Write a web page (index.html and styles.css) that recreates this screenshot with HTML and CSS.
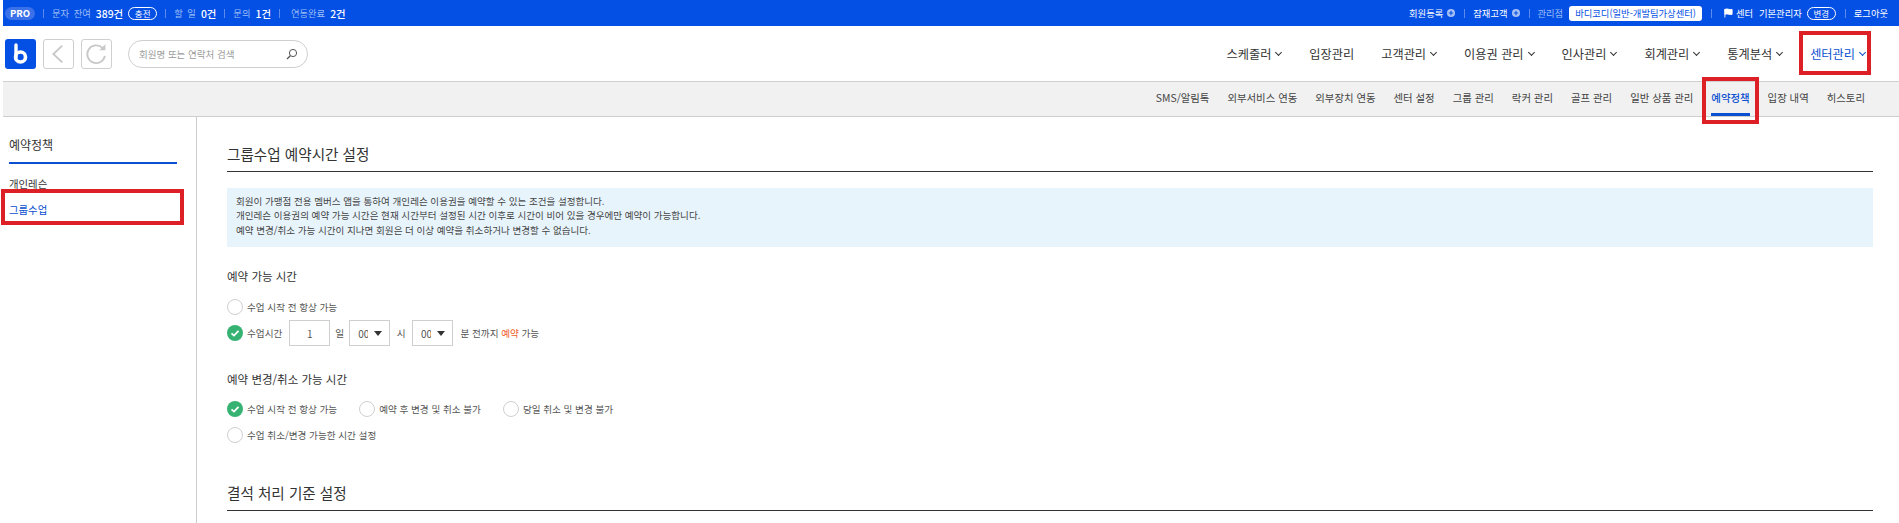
FILE: index.html
```html
<!DOCTYPE html>
<html lang="ko">
<head>
    <meta charset="utf-8">
    <title>예약정책</title>
    <link rel="stylesheet" href="styles.css">
</head>
<body>
    <div class="topbar">
        <div class="topbar-left">
            <span class="pro">PRO</span>
            <span class="sep"></span>
            <span class="dim">문자 잔여</span><b>389건</b><span class="outline-pill">충전</span>
            <span class="sep"></span>
            <span class="dim">할 일</span><b>0건</b>
            <span class="sep"></span>
            <span class="dim">문의</span><b>1건</b>
            <span class="sep"></span>
            <span class="dim pushed">연동완료</span><b>2건</b>
        </div>
        <div class="topbar-right">
            <span class="link">회원등록</span>
            <svg class="plus" viewBox="0 0 10 10"><circle cx="5" cy="5" r="5" fill="#a9c2f3"/><path d="M5 2.200v5.600M2.200 5h5.600" stroke="#0450e4" stroke-width="1.400"/></svg>
            <span class="sep"></span>
            <span class="link">잠재고객</span>
            <svg class="plus" viewBox="0 0 10 10"><circle cx="5" cy="5" r="5" fill="#a9c2f3"/><path d="M5 2.200v5.600M2.200 5h5.600" stroke="#0450e4" stroke-width="1.400"/></svg>
            <span class="sep"></span>
            <span class="dim">관리점</span>
            <span class="branch">바디코디(일반-개발팀가상센터)</span>
            <span class="sep"></span>
            <svg class="flag" viewBox="0 0 10 10"><path d="M1 0.500v9.500M1 1c3-1.500 5 1 8 0v5.500c-3 1-5-1.500-8 0z" fill="#fff" stroke="#fff"/></svg>
            <span class="link">센터</span>
            <span class="link">기본관리자</span>
            <span class="outline-pill">변경</span>
            <span class="sep"></span>
            <span class="link">로그아웃</span>
        </div>
    </div>

    <div class="header">
        <div class="logo">
            <svg viewBox="0 0 30 30"><path d="M10.500 6v12" stroke="#fff" stroke-width="3.400" stroke-linecap="round"/><circle cx="15" cy="18" r="5" fill="none" stroke="#fff" stroke-width="3.600"/></svg>
        </div>
        <div class="iconbtn">
            <svg viewBox="0 0 30 30"><path d="M19 6 9.500 15 19 24" fill="none" stroke="#c8c8c8" stroke-width="2"/></svg>
        </div>
        <div class="iconbtn">
            <svg viewBox="0 0 30 30"><path d="M24 17a9.500 9.500 0 1 1-2.600-8.500" fill="none" stroke="#c8c8c8" stroke-width="2"/><path d="M24.500 4.500v6.500h-6.500z" fill="#c8c8c8"/></svg>
        </div>
        <div class="search">
            <span>회원명 또는 연락처 검색</span>
            <svg viewBox="0 0 12 12"><circle cx="7" cy="5" r="3.600" fill="none" stroke="#555" stroke-width="1"/><path d="M4.300 7.700 1 11" stroke="#555" stroke-width="1.300"/></svg>
        </div>
        <nav class="mainnav">
            <a>스케줄러<i class="chev"></i></a>
            <a>입장관리</a>
            <a>고객관리<i class="chev"></i></a>
            <a>이용권 관리<i class="chev"></i></a>
            <a>인사관리<i class="chev"></i></a>
            <a>회계관리<i class="chev"></i></a>
            <a>통계분석<i class="chev"></i></a>
            <a class="on">센터관리<i class="chev"></i></a>
        </nav>
    </div>

    <div class="subnav">
        <a>SMS/알림톡</a>
        <a>외부서비스 연동</a>
        <a>외부장치 연동</a>
        <a>센터 설정</a>
        <a>그룹 관리</a>
        <a>락커 관리</a>
        <a>골프 관리</a>
        <a>일반 상품 관리</a>
        <a class="on">예약정책</a>
        <a>입장 내역</a>
        <a>히스토리</a>
    </div>

    <div class="page">
        <aside class="side">
            <div class="side-title">예약정책</div>
            <div class="side-item">개인레슨</div>
            <div class="side-item on">그룹수업</div>
        </aside>
        <main class="content">
            <h2 class="title">그룹수업 예약시간 설정</h2>
            <div class="info">
                <p>회원이 가맹점 전용 멤버스 앱을 통하여 개인레슨 이용권을 예약할 수 있는 조건을 설정합니다.</p>
                <p>개인레슨 이용권의 예약 가능 시간은 현재 시간부터 설정된 시간 이후로 시간이 비어 있을 경우에만 예약이 가능합니다.</p>
                <p>예약 변경/취소 가능 시간이 지나면 회원은 더 이상 예약을 취소하거나 변경할 수 없습니다.</p>
            </div>

            <h3 class="sub first">예약 가능 시간</h3>
            <div class="row short"><label class="radio"><i class="dot"></i>수업 시작 전 항상 가능</label></div>
            <div class="row tall">
                <label class="radio"><i class="dot checked"><svg viewBox="0 0 16 16"><path d="M4.500 8.300 7 10.600 11.500 5.800" fill="none" stroke="#fff" stroke-width="1.800"/></svg></i>수업시간</label>
                <span class="box num">1</span><span class="unit">일</span>
                <span class="box sel"><span class="val">00</span><i class="tri"></i></span><span class="unit wide">시</span>
                <span class="box sel"><span class="val">00</span><i class="tri"></i></span>
                <span class="tail">분 전까지 <em>예약</em> 가능</span>
            </div>

            <h3 class="sub second">예약 변경/취소 가능 시간</h3>
            <div class="row gaps">
                <label class="radio"><i class="dot checked"><svg viewBox="0 0 16 16"><path d="M4.500 8.300 7 10.600 11.500 5.800" fill="none" stroke="#fff" stroke-width="1.800"/></svg></i>수업 시작 전 항상 가능</label>
                <label class="radio"><i class="dot"></i>예약 후 변경 및 취소 불가</label>
                <label class="radio"><i class="dot"></i>당일 취소 및 변경 불가</label>
            </div>
            <div class="row last"><label class="radio"><i class="dot"></i>수업 취소/변경 가능한 시간 설정</label></div>

            <h2 class="title second">결석 처리 기준 설정</h2>
        </main>
    </div>

    <div class="mark mark-nav"></div>
    <div class="mark mark-sub"></div>
    <div class="mark mark-side"></div>
</body>
</html>
```

FILE: styles.css
```css
* {
    box-sizing: border-box;
}
html, body {
    margin: 0;
    height: 523px;
    overflow: hidden;
}
body {
    padding-left: 3px;
    background: #fff;
    color: #333;
    font-family: "Noto Sans CJK KR", "Noto Sans", sans-serif;
    font-size: 10px;
    position: relative;
}
.topbar {
    height: 26px;
    background: #0450e4;
    color: #fff;
    display: flex;
    justify-content: space-between;
    align-items: center;
    padding: 0 11px 0 2px;
    font-size: 9.300px;
    word-spacing: 2px;
}
.topbar-left, .topbar-right {
    display: flex;
    align-items: center;
}
.topbar b {
    font-size: 10.400px;
    font-weight: 500;
    margin-left: 5px;
}
.pro {
    background: #3a70e8;
    border-radius: 7px;
    height: 13px;
    width: 30px;
    line-height: 13px;
    text-align: center;
    font-size: 9.500px;
    font-weight: 700;
}
.sep {
    width: 1px;
    height: 9px;
    background: #5d8aea;
    margin: 0 8px;
}
.dim {
    color: #9dbcf5;
}
.pushed {
    margin-left: 3px;
}
.outline-pill {
    border: 1px solid #fff;
    border-radius: 7px;
    height: 13px;
    width: 29px;
    margin-left: 5px;
    line-height: 10px;
    text-align: center;
    font-size: 8.500px;
}
.plus {
    width: 8px;
    height: 8px;
    margin-left: 4px;
}
.branch {
    background: #fff;
    color: #0450e4;
    border-radius: 3px;
    height: 15px;
    line-height: 14px;
    padding: 0 6px;
    margin-left: 6px;
    word-spacing: 0;
}
.flag {
    width: 9px;
    height: 10px;
    margin: 0 3px 0 4px;
}
.link + .link {
    margin-left: 6px;
}
.topbar-right .sep {
    margin: 0 8px 0 9px;
}
.header {
    height: 56px;
    display: flex;
    align-items: center;
    border-bottom: 1px solid #cfcfcf;
    padding: 0 0 0 2px;
}
.logo {
    width: 31px;
    height: 30px;
    background: #0450e4;
    border-radius: 3px;
}
.logo svg, .iconbtn svg {
    display: block;
    width: 100%;
    height: 100%;
}
.iconbtn {
    width: 31px;
    height: 30px;
    border: 1px solid #cfcfcf;
    border-radius: 3px;
    margin-left: 7px;
}
.search {
    width: 180px;
    height: 28px;
    border: 1px solid #cfcfcf;
    border-radius: 14px;
    margin-left: 16px;
    padding: 0 9px 0 10px;
    display: flex;
    align-items: center;
    justify-content: space-between;
    color: #9a9a9a;
    font-size: 9.500px;
}
.search svg {
    width: 12px;
    height: 12px;
}
.mainnav {
    margin-left: auto;
    padding-right: 33px;
    display: flex;
    gap: 27px;
    font-size: 12.200px;
    color: #333;
}
.mainnav a {
    display: flex;
    align-items: center;
}
.mainnav .on {
    color: #0b50d0;
}
.chev {
    width: 5px;
    height: 5px;
    margin: -2px 1px 0 5px;
    border-right: 1.800px solid currentColor;
    border-bottom: 1.800px solid currentColor;
    transform: rotate(45deg);
}
.subnav {
    height: 35px;
    background: #f1f1f1;
    border-bottom: 1px solid #cfcfcf;
    display: flex;
    justify-content: flex-end;
    gap: 18px;
    padding-right: 34px;
    font-size: 10.400px;
    color: #444;
}
.subnav a {
    line-height: 32px;
    height: 34px;
}
.subnav .on {
    color: #0b50d0;
    font-weight: 500;
    border-bottom: 3px solid #0b50d0;
}
.page {
    display: flex;
    height: 406px;
}
.side {
    width: 194px;
    border-right: 1px solid #cfcfcf;
    padding: 18px 19px 0 6px;
}
.side-title {
    font-size: 12px;
    line-height: 20px;
    padding-bottom: 7px;
    border-bottom: 2px solid #0b50d0;
    margin-bottom: 12px;
}
.side-item {
    font-size: 10.400px;
    line-height: 16px;
    margin-bottom: 10px;
}
.side-item.on {
    color: #0b50d0;
}
.content {
    flex: 1;
    padding: 25px 26px 0 30px;
}
.title {
    margin: 0;
    font-size: 14.600px;
    font-weight: 400;
    line-height: 24px;
    padding-bottom: 5px;
    border-bottom: 1px solid #333;
    color: #333;
}
.info {
    margin-top: 16px;
    height: 59px;
    background: #e8f4fc;
    padding: 5.500px 9px;
    font-size: 9.550px;
    line-height: 14.700px;
    color: #444;
}
.info p {
    margin: 0;
}
.sub {
    margin: 0;
    font-size: 11.500px;
    font-weight: 400;
    line-height: 18px;
    color: #333;
}
.sub.first {
    margin-top: 20px;
    margin-bottom: 12px;
}
.sub.second {
    margin-top: 24px;
    margin-bottom: 11px;
}
.row {
    display: flex;
    align-items: center;
    height: 20px;
    font-size: 9.600px;
    color: #555;
    margin-bottom: 6px;
}
.row.short {
    margin-bottom: 3px;
}
.row.tall {
    height: 26px;
    margin-bottom: 0;
}
.row.last {
    margin-bottom: 36px;
}
.gaps {
    gap: 22px;
}
.radio {
    display: flex;
    align-items: center;
}
.dot {
    width: 16px;
    height: 16px;
    border: 1px solid #cfcfcf;
    border-radius: 50%;
    margin-right: 4px;
    flex: none;
}
.dot svg {
    display: block;
    width: 16px;
    height: 16px;
}
.dot.checked {
    border: 0;
    background: #36b373;
}
.box {
    width: 41px;
    height: 26px;
    border: 1px solid #cfcfcf;
    display: flex;
    align-items: center;
    justify-content: center;
    background: #fff;
}
.num {
    margin-left: 7px;
    font-size: 10px;
}
.sel {
    justify-content: flex-start;
    padding-left: 8px;
    gap: 6px;
}
.val {
    width: 10px;
    overflow: hidden;
    font-size: 10px;
}
.unit {
    margin: 0 5px;
}
.unit.wide {
    margin: 0 6.500px;
}
.tri {
    width: 0;
    height: 0;
    border-left: 4px solid transparent;
    border-right: 4px solid transparent;
    border-top: 5px solid #333;
}
.tail {
    margin-left: 7.500px;
}
.tail em {
    font-style: normal;
    color: #ef5b2b;
}
.mark {
    position: absolute;
    border: 4px solid #dd1f26;
}
.mark-nav {
    left: 1799px;
    top: 31px;
    width: 72px;
    height: 44px;
}
.mark-sub {
    left: 1702px;
    top: 77px;
    width: 57px;
    height: 47px;
}
.mark-side {
    left: 1px;
    top: 189px;
    width: 183px;
    height: 36px;
}
```
